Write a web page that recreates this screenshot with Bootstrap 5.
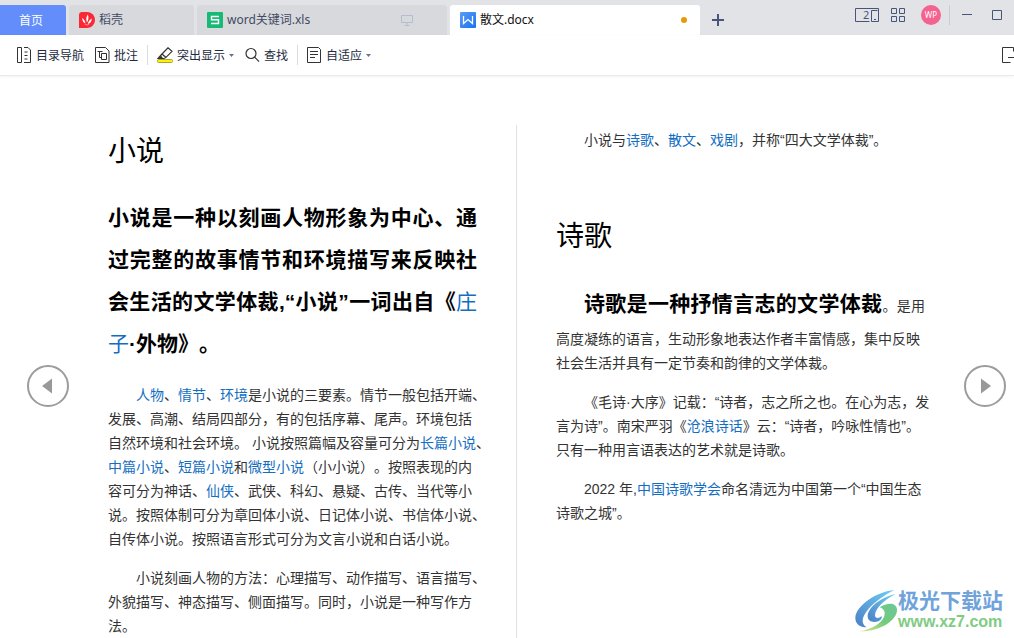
<!DOCTYPE html>
<html lang="zh-CN">
<head>
<meta charset="utf-8">
<meta name="viewport" content="width=device-width, initial-scale=1">
<title>散文.docx</title>
<link rel="stylesheet" href="https://cdn.jsdelivr.net/npm/bootstrap@5.3.0/dist/css/bootstrap.min.css">
<style>
  body { font-family: "Liberation Sans", "Noto Sans CJK SC", sans-serif; font-size: 14px; line-height: 24px; color: #333; background: #fff; }
  button { border: 0; background: none; padding: 0; color: inherit; line-height: 0; }
  svg { display: block; flex: none; }
  a { color: #136ec2; text-decoration: none; }

  .tabbar { background: #e2e3e7; height: 35px; gap: 3px; font-family: "Noto Sans", "Noto Sans CJK SC", sans-serif; font-size: 12px; color: #414b63; }
  .doc-tab { height: 30px; background: #d8d9dd; border-radius: 3px 3px 0 0; padding: 0 10px; gap: 4px; line-height: 32px; }
  .tab-home { width: 66px; background: #628dfb; color: #fff; border-radius: 0 3px 0 0; padding-right: 14px; }
  .tab-docer { width: 125px; }
  .tab-file { width: 250px; }
  .tab-active { background: #fff; color: #111; }
  .unsaved { width: 6px; height: 6px; border-radius: 50%; background: #e69a05; margin-right: 3px; }
  .window-tools { height: 30px; color: #47557a; padding-right: 12px; }
  .avatar { width: 20px; height: 20px; border-radius: 50%; background: #f4628f; color: #fff; font-size: 8px; line-height: 20px; }
  .v-rule { width: 1px; height: 20px; background: #cbccd1; }

  .toolbar { height: 41px; gap: 11px; padding-left: 16px; border-bottom: 1px solid #eaeaea; box-shadow: 0 1px 3px #0000000d; font-family: "Noto Sans", "Noto Sans CJK SC", sans-serif; font-size: 12px; color: #222b3d; }
  .tool { gap: 4px; }
  .tool span { line-height: 20px; padding-top: 2px; }
  .tool-rule { margin: 0 -2px; background: #dcdcdc; }
  .exit-tool { margin-right: -5px; }

  .page-turn { width: 42px; height: 42px; margin-top: 289px; border: 2px solid #9c9c9c; border-radius: 50%; }
  .gutter-left { flex: 0 0 108px; padding-left: 27px; }
  .gutter-right { flex: 0 0 89px; padding-left: 39px; }
  .sheet { flex: 1 1 0; min-width: 0; padding-top: 52px; text-spacing-trim: space-all; }
  .sheet-rule { flex: 0 0 1px; margin: 49px 39px 0; background: #e2e2e2; }
  .sheet h1 { font-size: 28px; line-height: 42px; font-weight: 400; color: #000; margin: 0; }
  .sheet h2 { font-size: 21px; line-height: 42px; font-weight: 700; color: #000; text-align: justify; margin: 0; }
  .sheet h2 a { font-weight: 400; }
  .sheet p { text-indent: 28px; white-space: nowrap; margin: 0 0 15px; }
  .chapter-first { padding: 3px 0 24px; }
  .chapter-next { padding: 49px 0 25px; }
  .sheet .after-title { margin-top: 18px; }
  .lead-line { display: block; text-align: justify; text-align-last: justify; line-height: 42px; }
  .lead-line strong { font-size: 21px; color: #000; }

  .site-mark { position: absolute; right: 11px; bottom: 6px; }
  .site-cn { font-size: 21px; line-height: 22px; font-weight: 700; color: #6fa3da; }
  .site-url { font-size: 16px; line-height: 20px; font-weight: 700; color: #80cc84; }
</style>
<script src="https://cdn.jsdelivr.net/npm/bootstrap@5.3.0/dist/js/bootstrap.bundle.min.js"></script>
</head>
<body class="vh-100 d-flex flex-column overflow-hidden position-relative">

<header class="tabbar d-flex align-items-end flex-shrink-0">
  <button class="doc-tab tab-home">首页</button>
  <button class="doc-tab tab-docer d-flex align-items-center">
    <svg width="16" height="16" viewBox="0 0 16 16"><path d="M3 0H8a8 8 0 0 1 0 16H0V3a3 3 0 0 1 3-3z" fill="#fc2735"/><path d="M8.800 2.500c1.200 2.500.8 5.500-.8 8-1.200-3-.8-6 .8-8zM3.200 6c1.800 1 3 3 3.300 5.500-2-.8-3.500-3-3.300-5.500zM12.800 6.500c0 3-1.500 5-4 5.500.5-2.500 1.800-4.500 4-5.500zM5 12q3 1.200 5.500.3-2 2.200-5.500-.3z" fill="#fff"/></svg>
    <span>稻壳</span>
  </button>
  <button class="doc-tab tab-file d-flex align-items-center">
    <svg width="16" height="16" viewBox="0 0 16 16"><rect width="16" height="16" rx="1" fill="#16ba75"/><path d="M12 4.500H4.500v3.300h7v3.700H4" fill="none" stroke="#fff" stroke-width="1.400"/></svg>
    <span>word关键词.xls</span>
    <svg class="ms-auto me-4" width="12" height="12" viewBox="0 0 12 12" fill="none" stroke="#b4bccf"><path d="M.5 1.500h11v7H.5zM6 8.500v3M3.500 11.500h5"/></svg>
  </button>
  <button class="doc-tab tab-file tab-active d-flex align-items-center">
    <svg width="16" height="16" viewBox="0 0 16 16"><defs><linearGradient id="wg" x2="1" y2="1"><stop stop-color="#5b9bf8"/><stop offset="1" stop-color="#1673ee"/></linearGradient></defs><rect width="16" height="16" rx="1" fill="url(#wg)"/><path d="M3.500 4v7.500L8 7.500l4.500 4V4" fill="none" stroke="#fff" stroke-width="1.300"/></svg>
    <span>散文.docx</span>
    <span class="unsaved ms-auto"></span>
  </button>
  <button class="align-self-center ms-2 mt-1" aria-label="新建标签"><svg width="14" height="14" viewBox="0 0 14 14" stroke="#47557a" stroke-width="2"><path d="M7 1v12M1 7h12"/></svg></button>
  <div class="window-tools d-flex align-items-center align-self-start ms-auto">
    <button aria-label="双屏"><svg width="24" height="14" viewBox="0 0 24 14" fill="none" stroke="currentColor"><path d="M14.500 13.500H.5V.5h23v13h-7v-11h6M19 11.500h2"/><text x="8" y="11" font-size="11" fill="currentColor" stroke="none">2</text></svg></button>
    <button class="ms-2 ps-1 me-3" aria-label="应用"><svg width="14" height="14" viewBox="0 0 14 14" fill="none" stroke="currentColor"><path d="M.5.500h5v5h-5zM8.500.500h5v5h-5zM.5 8.500h5v5h-5zM8.500 8.500h5v5h-5z"/></svg></button>
    <button class="avatar">WP</button>
    <span class="v-rule ms-2 me-2"></span>
    <button class="ms-1 me-3 pe-1" aria-label="最小化"><svg width="10" height="10" viewBox="0 0 10 10" stroke="currentColor"><path d="M0 4.500h10"/></svg></button>
    <button aria-label="最大化"><svg width="10" height="10" viewBox="0 0 10 10" fill="none" stroke="currentColor"><path d="M.5.500h9v9h-9z"/></svg></button>
  </div>
</header>

<nav class="toolbar d-flex align-items-center flex-shrink-0">
  <button class="tool d-flex align-items-center"><svg width="16" height="16" viewBox="0 0 16 16" fill="none" stroke="#333"><path d="M1.500.500h4v15h-4zM8 .5h4l2.500 2.500v12.500H8M8.500 5h3M8.500 8.500h3M8.500 12h3"/></svg><span>目录导航</span></button>
  <button class="tool d-flex align-items-center"><svg width="15" height="16" viewBox="0 0 15 16" fill="none" stroke="#333"><path d="M.5.500h10l3.500 3.500v11.500H.5zM2.500 4.500h5M4.500 4.500v6h2M6.500 6.500h5v6h-5z"/></svg><span>批注</span></button>
  <span class="v-rule tool-rule"></span>
  <button class="tool d-flex align-items-center"><svg width="16" height="16" viewBox="0 0 16 16" fill="none" stroke="#333"><rect x=".5" y="12.500" width="15" height="3" rx="1" fill="#fff200" stroke="#a9a43a"/><path d="M1 11.500l3.500-4L11 .8l4 3.500-6 6-2 1.200zM5 7l4 3.500" stroke-width="1.200"/><path d="M1 12l3-3.500 2.500 3.500z" fill="#333" stroke="none"/></svg><span>突出显示</span><svg width="5" height="3" viewBox="0 0 5 3"><path d="M0 0h5L2.500 3z" fill="#68738b"/></svg></button>
  <button class="tool d-flex align-items-center"><svg width="15" height="16" viewBox="0 0 15 16" fill="none" stroke="#333" stroke-width="1.200"><circle cx="6" cy="6.500" r="5"/><path d="M9.600 10.200l4.500 4.500"/></svg><span>查找</span></button>
  <span class="v-rule tool-rule"></span>
  <button class="tool d-flex align-items-center"><svg width="15" height="16" viewBox="0 0 15 16" fill="none" stroke="#333"><path d="M.5.500h11l2 2v13H.5zM3 4.500h8M3 7.500h8M3 10.500h5"/></svg><span>自适应</span><svg width="5" height="3" viewBox="0 0 5 3"><path d="M0 0h5L2.500 3z" fill="#68738b"/></svg></button>
  <button class="exit-tool ms-auto" aria-label="退出阅读"><svg width="17" height="16" viewBox="0 0 17 16" fill="none" stroke="#333"><path d="M8.500 15.500h-8V.5h11v4M6 10.500h10M12.500 7l3.500 3.500-3.500 3.500"/></svg></button>
</nav>

<main class="d-flex flex-fill overflow-hidden">
  <div class="gutter-left"><button class="page-turn d-flex align-items-center justify-content-center" aria-label="上一页"><svg width="12" height="16" viewBox="0 0 12 16"><path d="M0 8l10-7.500v15z" fill="#999"/></svg></button></div>

  <article class="sheet">
    <h1 class="chapter-first">小说</h1>
    <h2>小说是一种以刻画人物形象为中心、通过完整的故事情节和环境描写来反映社会生活的文学体裁,“小说”一词出自《<a href="#">庄子</a>·外物》。</h2>
    <p class="after-title"><a href="#">人物</a>、<a href="#">情节</a>、<a href="#">环境</a>是小说的三要素。情节一般包括开端、<br>发展、高潮、结局四部分，有的包括序幕、尾声。环境包括<br>自然环境和社会环境。 小说按照篇幅及容量可分为<a href="#">长篇小说</a>、<br><a href="#">中篇小说</a>、<a href="#">短篇小说</a>和<a href="#">微型小说</a>（小小说）。按照表现的内<br>容可分为神话、<a href="#">仙侠</a>、武侠、科幻、悬疑、古传、当代等小<br>说。按照体制可分为章回体小说、日记体小说、书信体小说、<br>自传体小说。按照语言形式可分为文言小说和白话小说。</p>
    <p>小说刻画人物的方法：心理描写、动作描写、语言描写、<br>外貌描写、神态描写、侧面描写。同时，小说是一种写作方<br>法。</p>
  </article>

  <div class="sheet-rule"></div>

  <article class="sheet">
    <p>小说与<a href="#">诗歌</a>、<a href="#">散文</a>、<a href="#">戏剧</a>，并称“四大文学体裁”。</p>
    <h1 class="chapter-next">诗歌</h1>
    <p><span class="lead-line"><strong>诗歌是一种抒情言志的文学体裁</strong>。是用</span>高度凝练的语言，生动形象地表达作者丰富情感，集中反映<br>社会生活并具有一定节奏和韵律的文学体裁。</p>
    <p>《毛诗·大序》记载：“诗者，志之所之也。在心为志，发<br>言为诗”。南宋严羽《<a href="#">沧浪诗话</a>》云：“诗者，吟咏性情也”。<br>只有一种用言语表达的艺术就是诗歌。</p>
    <p>2022 年,<a href="#">中国诗歌学会</a>命名清远为中国第一个“中国生态<br>诗歌之城”。</p>
  </article>

  <div class="gutter-right"><button class="page-turn d-flex align-items-center justify-content-center" aria-label="下一页"><svg width="12" height="16" viewBox="0 0 12 16"><path d="M12 8L2 .5v15z" fill="#999"/></svg></button></div>
</main>

<div class="site-mark d-flex align-items-center">
  <svg width="43" height="42" viewBox="12 14 129 126"><defs><linearGradient id="sw" x1="1" x2="0" y2="1"><stop stop-color="#6fd0f4"/><stop offset="1" stop-color="#4c7fc6"/></linearGradient><linearGradient id="sg" x1="1" x2="0" y2="1"><stop stop-color="#6cc79a"/><stop offset=".5" stop-color="#72cb7c"/><stop offset="1" stop-color="#dbe58a"/></linearGradient></defs><path d="M130 14C80 18 14 60 13 98c0 18 14 28 34 28-14-8-16-24-4-42C60 56 96 32 130 14z" fill="url(#sw)"/><path d="M134 26C98 34 54 60 50 90c-2 16 14 24 32 18 8-4 12-10 10-16-8 8-20 8-20-2 0-22 30-48 62-64z" fill="url(#sw)"/><path d="M86 66c24-16 50-14 52 6 2 32-50 68-114 66 40-6 68-24 76-46 4-12-2-22-14-26z" fill="url(#sg)"/></svg>
  <div><div class="site-cn">极光下载站</div><div class="site-url">www.xz7.com</div></div>
</div>
</body>
</html>
